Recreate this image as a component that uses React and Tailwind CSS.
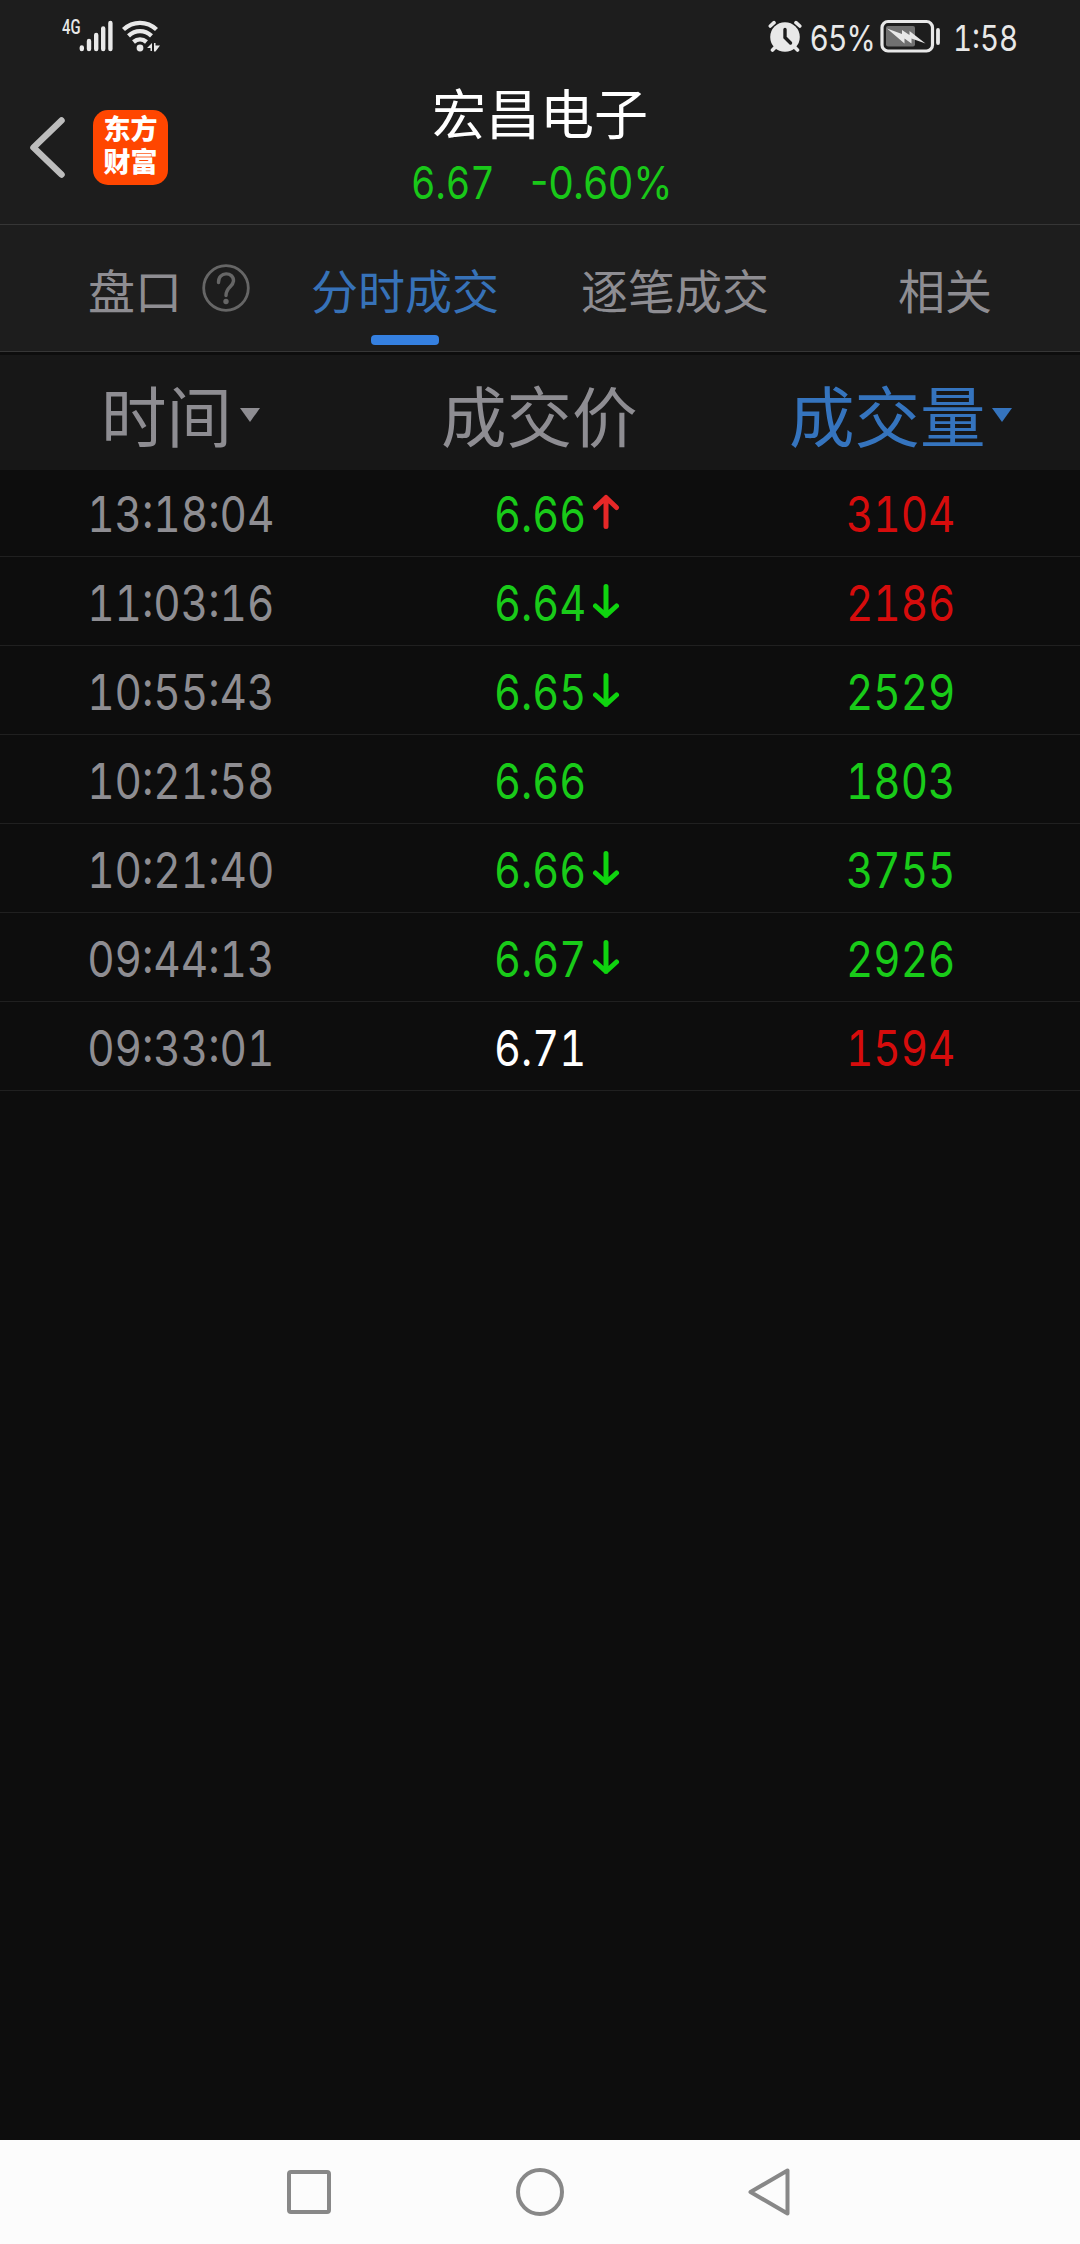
import React from 'react';

const trades = [
  { time: '13:18:04', price: '6.66', dir: 'up', volume: '3104', side: 'buy' },
  { time: '11:03:16', price: '6.64', dir: 'down', volume: '2186', side: 'buy' },
  { time: '10:55:43', price: '6.65', dir: 'down', volume: '2529', side: 'sell' },
  { time: '10:21:58', price: '6.66', dir: null, volume: '1803', side: 'sell' },
  { time: '10:21:40', price: '6.66', dir: 'down', volume: '3755', side: 'sell' },
  { time: '09:44:13', price: '6.67', dir: 'down', volume: '2926', side: 'sell' },
  { time: '09:33:01', price: '6.71', dir: null, volume: '1594', side: 'buy', flat: true },
];

const StatusBar = () => (
  <div className="flex h-[74px] items-start justify-between pl-[62px] pr-[60px] text-[#e8e8e8]">
    <div className="flex pt-[19px]">
      <span className="w-[16px] origin-left scale-x-[0.74] font-[Roboto] text-[20px] font-medium leading-[17px]">4G</span>
      <svg className="ml-px" width="36" height="34" viewBox="79 19 36 34" stroke="currentColor" strokeWidth="4.4" strokeLinecap="round">
        <path d="M81.8 47.5V49M89 41V49M96.2 35V49M103.2 28.5V49M110.4 23V49" />
      </svg>
      <svg className="ml-[6px]" width="40" height="34" viewBox="121 19 40 34" fill="none" stroke="currentColor" strokeWidth="4.4">
        <path d="M123.5 29.5C133 20.7 147 20.7 156.5 29.5" />
        <path d="M128.5 35.8C135.5 29.5 144.5 29.5 151.5 35.8" />
        <path d="M133.5 42C137.5 38.5 142.5 38.5 146.5 42" />
        <circle cx="140" cy="48" r="3.4" fill="currentColor" stroke="none" />
        <path d="M147 48L152 43V51H150.5V48ZM154 43H155.5V45.5H160L155.5 51.5H154Z" fill="currentColor" stroke="none" />
      </svg>
    </div>
    <div className="flex pt-[19px]">
      <svg width="34" height="34" viewBox="768 19 34 34">
        <circle cx="785" cy="37" r="14.8" fill="currentColor" />
        <path d="M770.3 26L774 22.7M799.8 26L796 22.7M775.5 47L772.5 50M794.5 47L797.5 50" stroke="currentColor" strokeWidth="3.6" strokeLinecap="round" />
        <path d="M785 29.5V37.5L790.5 43" fill="none" stroke="#1d1d1d" strokeWidth="3.4" strokeLinecap="round" />
      </svg>
      <span className="ml-[8px] w-[70px] origin-left scale-x-[0.85] whitespace-nowrap font-[Inter] text-[35px] leading-[38px]">65%</span>
      <svg width="62" height="34" viewBox="880 19 62 34">
        <rect x="882" y="21.5" width="50.5" height="29.5" rx="6" fill="none" stroke="currentColor" strokeWidth="3.2" />
        <rect x="886" y="26" width="29" height="20.5" rx="2" fill="#707070" />
        <path d="M887 28.5L902 34V30L909.5 35V31L925.5 43.5L911.5 38.5V43.5L904.5 38.5V43.5Z" fill="currentColor" />
        <path d="M938 30V43" stroke="currentColor" strokeWidth="3.8" strokeLinecap="round" />
      </svg>
      <span className="ml-[11px] w-[67px] origin-left scale-x-[0.84] whitespace-nowrap font-[Inter] text-[35px] tabular-nums leading-[38px]">1:58</span>
    </div>
  </div>
);

const Header = () => (
  <div className="grid h-[151px] grid-cols-[411px_280px_1fr] border-b border-[#363636]">
    <div className="flex pl-[27px]">
      <svg className="mt-[40px]" width="40" height="66" viewBox="28 114 40 66" fill="none" stroke="#bdbdbd" strokeWidth="6.5" strokeLinecap="round" strokeLinejoin="round">
        <path d="M62.5 120.5L34.5 147.5L62.5 174.5" />
      </svg>
      <div className="ml-[26px] mt-[36px] flex h-[75px] w-[75px] flex-col items-center rounded-[15px] bg-[#ff4600] pt-[4px] font-['Liberation_Sans','Noto_Sans_CJK_SC',sans-serif] text-[27px] font-black text-white">
        <span className="h-[33px] leading-[33px]">东方</span>
        <span className="h-[33px] leading-[33px]">财富</span>
      </div>
    </div>
    <div>
      <div className="whitespace-nowrap pl-[21px] font-['Noto_Sans_CJK_SC',sans-serif] text-[54px] leading-[76px] text-white">宏昌电子</div>
      <div className="flex whitespace-nowrap font-[Inter] text-[45px] leading-[66px] text-[#19c819]">
        <span className="w-[119px] shrink-0 origin-left scale-x-[0.84] tabular-nums">6.67</span>
        <span className="origin-left scale-x-[0.89]">-0.60%</span>
      </div>
    </div>
    <div />
  </div>
);

const Tabs = () => (
  <div className="flex h-[127px] border-b border-[#363636] pl-[88px] font-['Noto_Sans_CJK_SC',sans-serif] text-[47px] leading-[127px] text-[#8e8d92]">
    <div className="flex w-[223px]">
      <span>盘口</span>
      <svg className="ml-[19px] mt-[38px]" width="50" height="50" viewBox="0 0 50 50" fill="none" stroke="#666" strokeWidth="2.8">
        <circle cx="25" cy="25" r="22.3" />
        <path d="M17.5 19.5C17 8 33 8.5 32.5 18C32 24 25 24 25 32.5" strokeWidth="3.4" strokeLinecap="round" />
        <circle cx="25" cy="38.5" r="2.7" fill="#666" stroke="none" />
      </svg>
    </div>
    <div className="flex w-[270px] flex-col text-[#3772b8]">
      <span className="h-[110px]">分时成交</span>
      <span className="ml-[60px] h-[10px] w-[68px] rounded-[4px] bg-[#3580e0]" />
    </div>
    <span className="w-[317px]">逐笔成交</span>
    <span>相关</span>
  </div>
);

const Caret = () => (
  <svg className="mt-[3px]" width="20" height="14" viewBox="0 0 20 14" fill="currentColor">
    <path d="M0 0H20L10 14Z" />
  </svg>
);

const ColumnHeader = () => (
  <div className="mt-[3px] grid h-[115px] grid-cols-[441px_348px_1fr] bg-[#171717] font-['Noto_Sans_CJK_SC',sans-serif] text-[65.5px] leading-[117px] text-[#8e8d92]">
    <div className="flex items-center gap-[8px] pl-[101px]">
      <span>时间</span>
      <Caret />
    </div>
    <span>成交价</span>
    <div className="flex items-center gap-[6px] text-[#3574be]">
      <span>成交量</span>
      <Caret />
    </div>
  </div>
);

const Arrow = ({ dir }) => (
  <svg
    width="28"
    height="38"
    viewBox="0 0 28 38"
    fill="none"
    stroke="currentColor"
    strokeWidth="5"
    strokeLinecap="round"
    strokeLinejoin="round"
    className={dir === 'up' ? 'text-[#e62828]' : 'text-[#0fd40f]'}
  >
    {dir === 'up' ? <path d="M14 33.5V4.5M3.5 14.5L14 4.5L24.5 14.5" /> : <path d="M14 4.5V33.5M3.5 24L14 33.5L24.5 24" />}
  </svg>
);

const TradeRow = ({ trade }) => (
  <div className="grid h-[89px] grid-cols-[494px_352px_1fr] grid-rows-[88px] border-b border-[#202020] font-[Inter] text-[49px] tabular-nums leading-[94px]">
    <div className="origin-left scale-x-[0.863] pl-[101px] text-[#8e8d92]">{trade.time}</div>
    <div className={trade.flat ? 'flex text-white' : 'flex text-[#19cb19]'}>
      <span className="w-[98px] origin-left scale-x-[0.85]">{trade.price}</span>
      {trade.dir && (
        <span className="flex h-[88px] items-center">
          <Arrow dir={trade.dir} />
        </span>
      )}
    </div>
    <div className={trade.side === 'buy' ? 'origin-left scale-x-[0.86] text-[#d60c0c]' : 'origin-left scale-x-[0.86] text-[#19cb19]'}>{trade.volume}</div>
  </div>
);

const NavBar = () => (
  <div className="flex h-[104px] bg-[#fcfcfc]">
    <svg width="1080" height="104" viewBox="0 2140 1080 104" fill="none" stroke="#888" strokeWidth="4" strokeLinejoin="round">
      <rect x="289" y="2172" width="40" height="40" rx="2" />
      <circle cx="540" cy="2192" r="22" />
      <path d="M787.5 2170.5V2213.5L750.5 2192Z" />
    </svg>
  </div>
);

export default function App() {
  return (
    <div className="flex h-[2244px] w-[1080px] flex-col overflow-hidden bg-[#0d0d0d]">
      <div className="bg-[#1d1d1d]">
        <StatusBar />
        <Header />
        <Tabs />
      </div>
      <ColumnHeader />
      <div className="-mt-[2px] flex-1">
        {trades.map((trade) => (
          <TradeRow key={trade.time} trade={trade} />
        ))}
      </div>
      <NavBar />
    </div>
  );
}
